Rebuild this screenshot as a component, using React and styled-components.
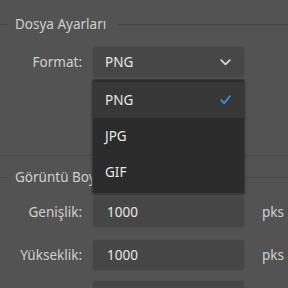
import React, { useState } from 'react'
import styled, { createGlobalStyle } from 'styled-components'

const Global = createGlobalStyle`
  html, body { margin: 0; padding: 0; background: #535353; }
  body { font-family: "Noto Sans", "Open Sans", sans-serif; overflow: hidden; }
`

const Page = styled.div`
  width: 288px;
  height: 288px;
  background: #535353;
  color: #d8d8d8;
  font-size: 13.5px;
  position: relative;
  overflow: hidden;
`

const Section = styled.div`
  border-top: ${p => (p.$divider ? '1px solid #474747' : 'none')};
  padding-top: ${p => p.$top}px;
  padding-bottom: ${p => p.$bottom}px;
`

const Legend = styled.div`
  display: flex;
  align-items: center;
  gap: 8px;
  height: 18px;
  color: #cfcfcf;
  &::before {
    content: '';
    width: 7px;
    border-top: 1px solid #474747;
  }
  &::after {
    content: '';
    flex: 1;
    margin-left: 4px;
    border-top: 1px solid #474747;
  }
`

const Row = styled.div`
  display: flex;
  align-items: center;
  height: 32px;
  margin-top: ${p => p.$gap}px;
`

const Label = styled.div`
  width: 92px;
  flex-shrink: 0;
  text-align: right;
  padding-right: 10px;
  box-sizing: border-box;
  color: #d0d0d0;
  white-space: nowrap;
`

const Field = styled.div`
  position: relative;
  width: 153px;
  flex-shrink: 0;
  height: 32px;
`

const Select = styled.div`
  box-sizing: border-box;
  height: 32px;
  border-radius: 4px;
  background: #474747;
  border: 1px solid #4f4f4f;
  display: flex;
  align-items: center;
  justify-content: space-between;
  padding: 0 13px 0 12px;
  color: #e8e8e8;
`

const Input = styled.div`
  box-sizing: border-box;
  height: 32px;
  border-radius: 4px;
  background: #464646;
  border: 1px solid #4e4e4e;
  display: flex;
  align-items: center;
  padding-left: 14px;
  color: #e8e8e8;
`

const Unit = styled.div`
  margin-left: 17px;
  color: #d0d0d0;
`

const Menu = styled.div`
  position: absolute;
  left: 0;
  top: 33px;
  width: 153px;
  box-sizing: border-box;
  background: #2b2b2b;
  border: 1px solid #3a3a3a;
  border-radius: 3px;
  padding: 2px 0 3px;
  z-index: 2;
  box-shadow: 0 1px 3px rgba(0, 0, 0, 0.4);
`

const Item = styled.div`
  height: 36px;
  display: flex;
  align-items: center;
  justify-content: space-between;
  padding: 0 13px 0 12px;
  background: ${p => (p.$active ? '#373737' : 'transparent')};
  color: #e8e8e8;
`

const Chevron = () => (
  <svg width="11" height="7" viewBox="0 0 11 7">
    <path d="M1.2 1.2 L5.5 5.3 L9.8 1.2" fill="none" stroke="#d6d6d6" strokeWidth="1.8" strokeLinecap="round" strokeLinejoin="round" />
  </svg>
)

const Check = () => (
  <svg width="11" height="10" viewBox="0 0 11 10">
    <path d="M1.2 5.2 L4.1 8.2 L9.8 1.3" fill="none" stroke="#3f8ef0" strokeWidth="1.8" strokeLinecap="round" strokeLinejoin="round" />
  </svg>
)

const formats = ['PNG', 'JPG', 'GIF']

export default function App() {
  const [format] = useState('PNG')
  return (
    <Page>
      <Global />
      <Section $top={15} $bottom={77}>
        <Legend>Dosya Ayarları</Legend>
        <Row $gap={13}>
          <Label>Format:</Label>
          <Field>
            <Select>
              <span>{format}</span>
              <Chevron />
            </Select>
            <Menu>
              {formats.map(f => (
                <Item key={f} $active={f === format}>
                  <span>{f}</span>
                  {f === format && <Check />}
                </Item>
              ))}
            </Menu>
          </Field>
        </Row>
      </Section>
      <Section $divider $top={12} $bottom={0}>
        <Legend>Görüntü Boyutu</Legend>
        <Row $gap={10}>
          <Label>Genişlik:</Label>
          <Field><Input>1000</Input></Field>
          <Unit>pks</Unit>
        </Row>
        <Row $gap={11}>
          <Label>Yükseklik:</Label>
          <Field><Input>1000</Input></Field>
          <Unit>pks</Unit>
        </Row>
        <Row $gap={9}>
          <Label />
          <Field><Input /></Field>
        </Row>
      </Section>
    </Page>
  )
}
